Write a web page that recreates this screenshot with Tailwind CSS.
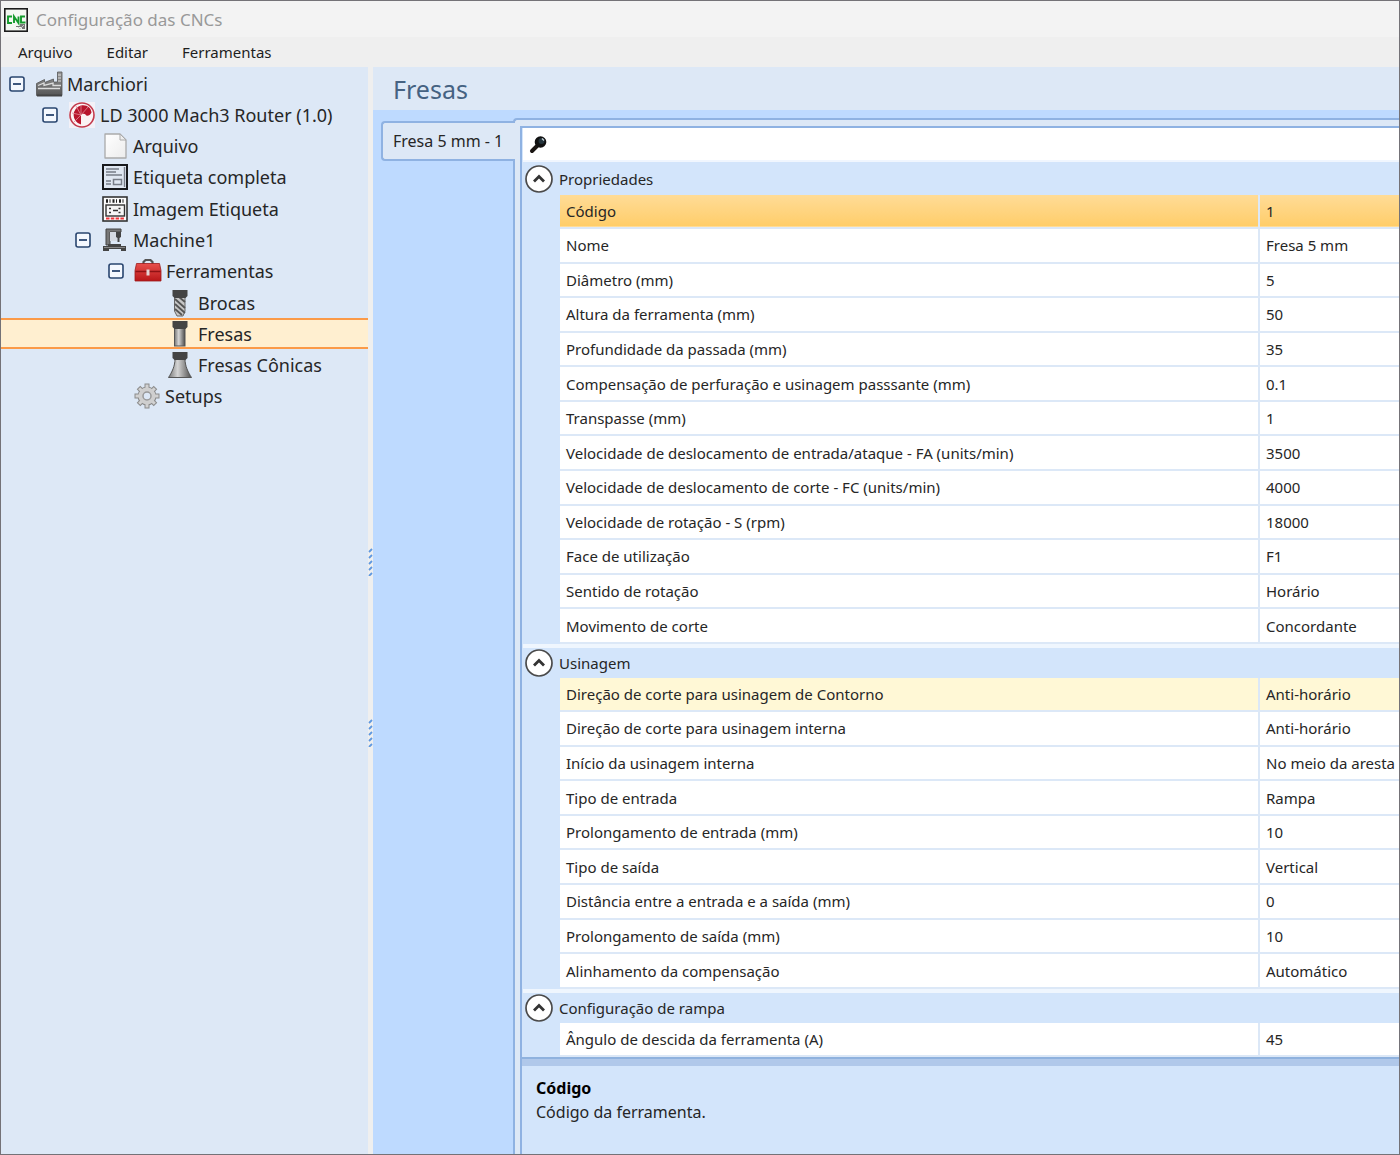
<!DOCTYPE html>
<html lang="pt-BR">
<head>
<meta charset="utf-8">
<title>Configuração das CNCs</title>
<script src="https://cdn.jsdelivr.net/npm/@tailwindcss/browser@4"></script>
</head>
<body class="font-['Noto_Sans',sans-serif] text-[15px] leading-5 text-[#262626]">
<svg class="absolute size-0" aria-hidden="true">
  <defs>
    <linearGradient id="steel" x1="0" x2="1"><stop offset="0" stop-color="#777"/><stop offset=".4" stop-color="#d4d4d4"/><stop offset="1" stop-color="#4c4c4c"/></linearGradient>
    <linearGradient id="red" x1="0" x2="0" y1="0" y2="1"><stop offset="0" stop-color="#e8504c"/><stop offset="1" stop-color="#b81618"/></linearGradient>
    <linearGradient id="grey" x1="0" x2="0" y1="0" y2="1"><stop offset="0" stop-color="#999"/><stop offset="1" stop-color="#555"/></linearGradient>
    <linearGradient id="paper" x1="0" x2="1" y1="0" y2="1"><stop offset="0" stop-color="#fff"/><stop offset="1" stop-color="#ececec"/></linearGradient>
    <symbol id="minus" viewBox="0 0 16 16"><rect x="1" y="1" width="14" height="14" rx="2" fill="#f4f8fe" stroke="#29456f" stroke-width="1.6"/><path d="M4 8h8" stroke="#29456f" stroke-width="1.8"/></symbol>
    <symbol id="collapse" viewBox="0 0 28 28"><circle cx="14" cy="14" r="13" fill="#fff" stroke="#4a4a4a" stroke-width="1.7"/><path d="M9 16.5l5-5 5 5" fill="none" stroke="#333" stroke-width="2.8"/></symbol>
    <symbol id="grip" viewBox="0 0 5 28"><path d="M1 4l3-3M1 10l3-3M1 16l3-3M1 22l3-3M1 28l3-3" stroke="#5f98e0" stroke-width="1.800"/></symbol>
  </defs>
</svg>

<div class="flex min-h-screen flex-col overflow-hidden border border-[#747277] bg-[#efefef]">
  <header class="flex h-9 items-center gap-2 bg-[#f3f3f3] pt-0.5 pl-[3px]">
    <svg class="size-6" viewBox="0 0 24 24" aria-hidden="true">
      <rect x=".8" y=".8" width="22.4" height="22.4" fill="#f4f8f2" stroke="#1c1c1c" stroke-width="1.6"/>
      <path d="M8 8.5H4v6.500h4M10 15V8.500l4.500 6.500V8.500M21 8.500h-4v6h4.500" fill="none" stroke="#149b2c" stroke-width="1.900"/>
      <path d="M12 18h4v-2h5v5h-3v-2h-6z" fill="#777"/><path d="M14 19l2 2 4-4" stroke="#ccc" fill="none"/>
    </svg>
    <h1 class="text-[17px] leading-6 text-[#999]">Configuração das CNCs</h1>
  </header>
  <nav class="flex h-[30px] items-center gap-[34px] pl-[17px] text-[#1e1e1e]" aria-label="Menu principal">
    <button type="button">Arquivo</button>
    <button type="button">Editar</button>
    <button type="button">Ferramentas</button>
  </nav>

  <div class="flex grow">
    <aside class="w-[367px] shrink-0 bg-[#dde8f6]">
      <ul class="grid h-[345px] auto-rows-fr pt-px text-lg leading-6 [&>li]:flex [&>li]:items-center [&_svg]:shrink-0">
        <li class="pl-2"><button type="button" aria-label="Recolher Marchiori" class="mr-2.5"><svg class="size-4"><use href="#minus"/></svg></button>
          <svg class="mr-1 size-7" viewBox="0 0 28 28" aria-hidden="true"><path d="M1.500 25.500V13.500l8-4v3l9-3.500v3h4V2h4.500v23.500z" fill="url(#grey)" stroke="#555" stroke-width=".8"/><path d="M2 25.500h25" stroke="#444" stroke-width="2"/><path d="M3 15.500l6-2.500v2.500l9-2.500v2.500h8M3 18.500h22" stroke="#ddd" fill="none" stroke-width="1.300"/><path d="M23 5h3M23 8h3M23 11h3" stroke="#ddd"/></svg>
          <a href="#">Marchiori</a></li>
        <li class="pl-[41px]"><button type="button" aria-label="Recolher LD 3000" class="mr-2.5"><svg class="size-4"><use href="#minus"/></svg></button>
          <svg class="mr-1 size-7" viewBox="0 0 28 28" aria-hidden="true"><rect x="1" y="1" width="26" height="26" fill="#f3f1f7"/><circle cx="14" cy="14" r="12" fill="#fbf3f4" stroke="#c23a4c" stroke-width="1.600"/><path d="M13 14v9.500A9.800 9.800 0 0 1 13 4.500c6-1 10 2 10.500 7-2 4-5 4-6 2-1-1-3-1-4.500.500z" fill="#b8152c"/><path d="M13 14L8 5M13 14L4 12M13 14l-7 7M13 14V4M13 14l7-8" stroke="#e08a97" stroke-width=".8"/></svg>
          <a href="#">LD 3000 Mach3 Router (1.0)</a></li>
        <li class="pl-[100px]">
          <svg class="mr-1 size-7" viewBox="0 0 28 28" aria-hidden="true"><path d="M4 2h15l6 6v18H4z" fill="url(#paper)" stroke="#aaa" stroke-width="1.300" stroke-linejoin="round"/><path d="M19 2v6h6z" fill="#eee" stroke="#aaa"/></svg>
          <a href="#">Arquivo</a></li>
        <li class="pl-[100px]">
          <svg class="mr-1 size-7" viewBox="0 0 28 28" aria-hidden="true"><rect x="2" y="2" width="24" height="24" fill="#dfe7f2" stroke="#17191d" stroke-width="2"/><path d="M5 6h13M5 9h10M5 12h16M5 18h5M5 21h5M23.500 4v20" stroke="#777d88" stroke-width="1.400"/><rect x="12.500" y="16.500" width="8" height="5" fill="none" stroke="#777d88" stroke-width="1.500"/></svg>
          <a href="#">Etiqueta completa</a></li>
        <li class="pl-[100px]">
          <svg class="mr-1 size-7" viewBox="0 0 28 28" aria-hidden="true"><rect x="2" y="2" width="24" height="24" fill="#fcfcfc" stroke="#333" stroke-width="1.600"/><path d="M5 6h18" stroke="#222" stroke-width="3.500" stroke-dasharray="2 1.500 1 2"/><rect x="5" y="10" width="18.500" height="11" fill="#f7f7f7" stroke="#333" stroke-width="1.400"/><path d="M8 13.500h13M8 17.500h13" stroke="#333" stroke-width="1.500" stroke-dasharray="2 7.500"/><path d="M12 15.500h5" stroke="#333" stroke-width="1.500"/><path d="M5 23.500h18" stroke="#f0353a" stroke-width="1.800" stroke-dasharray="3.500 1.300"/></svg>
          <a href="#">Imagem Etiqueta</a></li>
        <li class="pl-[74px]"><button type="button" aria-label="Recolher Machine1" class="mr-2.5"><svg class="size-4"><use href="#minus"/></svg></button>
          <svg class="mr-1 size-7" viewBox="0 0 28 28" aria-hidden="true"><path d="M5 19V3h15v3H9v13z" fill="#777" stroke="#444"/><path d="M9 6h7v9H9z" fill="#d5dae2"/><path d="M15 6h5v5l-1.500 1v4h-2v-4L15 11z" fill="#444"/><path d="M7 18h13v2h5v5h-5v-2H8v2H2v-5h5z" fill="#444"/><path d="M3 21.500h21" stroke="#888"/></svg>
          <a href="#">Machine1</a></li>
        <li class="pl-[107px]"><button type="button" aria-label="Recolher Ferramentas" class="mr-2.5"><svg class="size-4"><use href="#minus"/></svg></button>
          <svg class="mr-1 size-7" viewBox="0 0 28 28" aria-hidden="true"><path d="M9.500 7V5l2-2h5l2 2v2" fill="none" stroke="#555" stroke-width="2.200"/><path d="M2.500 6.500h23l1.500 7V24H1V13.500z" fill="url(#red)" stroke="#9c1b1b" stroke-width=".8"/><path d="M1.500 14.500h25" stroke="#8f1214" stroke-width="1.500"/><rect x="12.500" y="12.500" width="3" height="6" fill="#e4d4d4"/></svg>
          <a href="#">Ferramentas</a></li>
        <li class="pl-[165px]">
          <svg class="mr-1 size-7" viewBox="0 0 28 28" aria-hidden="true"><path d="M8.500 8h10.500v14l-2 5h-6l-2.500-5z" fill="#c7c7c7" stroke="#666"/><path d="M9 10l10 9M9 15l10 9M9 20l7 6M13 8l6 5" stroke="#555" stroke-width="1.800"/><path d="M6.500 1h15v6l-2 2h-11l-2-2z" fill="#444"/></svg>
          <a href="#">Brocas</a></li>
        <li class="border-y-2 border-[#fb9a48] bg-[#ffefd0] pl-[165px]">
          <svg class="mr-1 size-7" viewBox="0 0 28 28" aria-hidden="true"><rect x="8.500" y="8" width="10.500" height="18" fill="url(#steel)" stroke="#555"/><path d="M6.500 1h15v6l-2 2h-11l-2-2z" fill="#444"/></svg>
          <a href="#" aria-current="page">Fresas</a></li>
        <li class="pl-[165px]">
          <svg class="mr-1 size-7" viewBox="0 0 28 28" aria-hidden="true"><path d="M9 8h10c0 7 3 13 6.500 18.500h-23C6 21 9 15 9 8z" fill="url(#steel)" stroke="#555"/><path d="M6.500 1h15v6l-2 2h-11l-2-2z" fill="#444"/></svg>
          <a href="#">Fresas Cônicas</a></li>
        <li class="pl-[132px]">
          <svg class="mr-1 size-7" viewBox="0 0 28 28" aria-hidden="true"><g stroke="#8b8b8b" stroke-width="5"><path d="M14 1.500v25M1.500 14h25M5.500 5.500l17 17M22.500 5.500l-17 17"/></g><circle cx="14" cy="14" r="9.500" fill="#8b8b8b"/><g stroke="#d2d2d2" stroke-width="3"><path d="M14 2.500v23M2.500 14h23M6.200 6.200l15.600 15.600M21.800 6.200L6.200 21.800"/></g><circle cx="14" cy="14" r="8.500" fill="#cfcfcf"/><circle cx="14" cy="14" r="4" fill="#dde8f6" stroke="#999" stroke-width="1.500"/></svg>
          <a href="#">Setups</a></li>
      </ul>
    </aside>

    <div class="flex w-[5px] shrink-0 flex-col items-end gap-[143px] bg-[#efefef] pt-[481px]" role="separator" aria-orientation="vertical">
      <svg class="h-7 w-[5px] shrink-0"><use href="#grip"/></svg>
      <svg class="h-7 w-[5px] shrink-0"><use href="#grip"/></svg>
    </div>

    <main class="flex min-w-0 grow flex-col bg-[#bedaff]">
      <h2 class="h-[43px] bg-[#dde8f6] pl-5 text-[25px] leading-[44px] text-[#456282]">Fresas</h2>
      <div class="flex grow pt-2">
        <div class="w-[140px] shrink-0 pt-[3px] pl-2" role="tablist">
          <button type="button" role="tab" aria-selected="true" class="relative z-10 flex h-10 w-[134px] items-center rounded-l border-2 border-r-0 border-[#8fb2e2] bg-[#dde8f6] pl-2.5 text-base leading-5">Fresa 5 mm - 1</button>
        </div>
        <section class="flex min-w-0 grow flex-col rounded-tl border-t-2 border-l-2 border-[#8fb2e2] bg-[#dde8f6] pt-1.5 pl-[5px]" role="tabpanel" aria-label="Fresa 5 mm - 1">
          <div class="flex min-w-0 grow flex-col border-t-2 border-l-2 border-[#8fb2e2] bg-[#d3e5fb] pl-px">
            <label class="flex h-8 items-center gap-2 bg-white pl-1.5">
              <svg class="size-5 shrink-0" viewBox="0 0 20 20" aria-hidden="true"><path d="M3 17l5-5" stroke="#1a1512" stroke-width="4" stroke-linecap="round"/><circle cx="11.500" cy="8" r="5.800" fill="#111"/><circle cx="12.500" cy="7" r="3" fill="#24343c"/><path d="M13 4.500l2 2" stroke="#c8d4d8" stroke-width="1.300"/></svg>
              <input type="search" aria-label="Pesquisar propriedades" class="w-full outline-none">
            </label>

            <div class="border-t-2 border-[#f0f6fe] bg-[#d3e5fb] pt-px [&_h3]:flex [&_h3]:items-center [&_h3]:gap-1.5 [&_h3]:pl-0.5 [&_h3_svg]:size-7 [&_section]:border-b-4 [&_section]:border-[#eff6fe] [&_table]:ml-[37px] [&_table]:w-[calc(100%-37px)] [&_table]:table-fixed [&_table]:bg-white [&_td]:w-[140px] [&_td]:border-l-2 [&_td]:border-[#dce8f7] [&_td]:pl-1.5 [&_td]:whitespace-nowrap [&_th]:pl-1.5 [&_th]:text-left [&_th]:font-normal [&_tr]:border-b-2 [&_tr]:border-[#dce8f7]">
              <section>
                <h3 class="h-8"><button type="button" aria-label="Recolher Propriedades"><svg><use href="#collapse"/></svg></button>Propriedades</h3>
                <table class="h-[449px]">
                  <tbody>
                    <tr class="bg-linear-to-b from-[#ffdc96] to-[#ffcd69]"><th scope="row">Código</th><td>1</td></tr>
                    <tr><th scope="row">Nome</th><td>Fresa 5 mm</td></tr>
                    <tr><th scope="row">Diâmetro (mm)</th><td>5</td></tr>
                    <tr><th scope="row">Altura da ferramenta (mm)</th><td>50</td></tr>
                    <tr><th scope="row">Profundidade da passada (mm)</th><td>35</td></tr>
                    <tr><th scope="row">Compensação de perfuração e usinagem passsante (mm)</th><td>0.1</td></tr>
                    <tr><th scope="row">Transpasse (mm)</th><td>1</td></tr>
                    <tr><th scope="row">Velocidade de deslocamento de entrada/ataque - FA (units/min)</th><td>3500</td></tr>
                    <tr><th scope="row">Velocidade de deslocamento de corte - FC (units/min)</th><td>4000</td></tr>
                    <tr><th scope="row">Velocidade de rotação - S (rpm)</th><td>18000</td></tr>
                    <tr><th scope="row">Face de utilização</th><td>F1</td></tr>
                    <tr><th scope="row">Sentido de rotação</th><td>Horário</td></tr>
                    <tr><th scope="row">Movimento de corte</th><td>Concordante</td></tr>
                  </tbody>
                </table>
              </section>
              <section>
                <h3 class="h-[30px]"><button type="button" aria-label="Recolher Usinagem"><svg><use href="#collapse"/></svg></button>Usinagem</h3>
                <table class="h-[311px]">
                  <tbody>
                    <tr class="bg-[#fff8d6]"><th scope="row">Direção de corte para usinagem de Contorno</th><td>Anti-horário</td></tr>
                    <tr><th scope="row">Direção de corte para usinagem interna</th><td>Anti-horário</td></tr>
                    <tr><th scope="row">Início da usinagem interna</th><td>No meio da aresta</td></tr>
                    <tr><th scope="row">Tipo de entrada</th><td>Rampa</td></tr>
                    <tr><th scope="row">Prolongamento de entrada (mm)</th><td>10</td></tr>
                    <tr><th scope="row">Tipo de saída</th><td>Vertical</td></tr>
                    <tr><th scope="row">Distância entre a entrada e a saída (mm)</th><td>0</td></tr>
                    <tr><th scope="row">Prolongamento de saída (mm)</th><td>10</td></tr>
                    <tr><th scope="row">Alinhamento da compensação</th><td>Automático</td></tr>
                  </tbody>
                </table>
              </section>
              <section class="border-b-0!">
                <h3 class="h-[30px]"><button type="button" aria-label="Recolher Configuração de rampa"><svg><use href="#collapse"/></svg></button>Configuração de rampa</h3>
                <table class="h-[34px]">
                  <tbody>
                    <tr><th scope="row">Ângulo de descida da ferramenta (A)</th><td>45</td></tr>
                  </tbody>
                </table>
              </section>
            </div>

            <div class="-ml-px grow border-t-2 border-[#8fb2de] bg-[#d3e5fb]">
              <div class="h-[7px] bg-[#b0c8ea]"></div>
              <div class="px-3.5 pt-2.5 pb-4 text-base leading-6">
                <h4 class="font-bold text-black">Código</h4>
                <p>Código da ferramenta.</p>
              </div>
            </div>
          </div>
        </section>
      </div>
    </main>
  </div>
</div>
</body>
</html>
